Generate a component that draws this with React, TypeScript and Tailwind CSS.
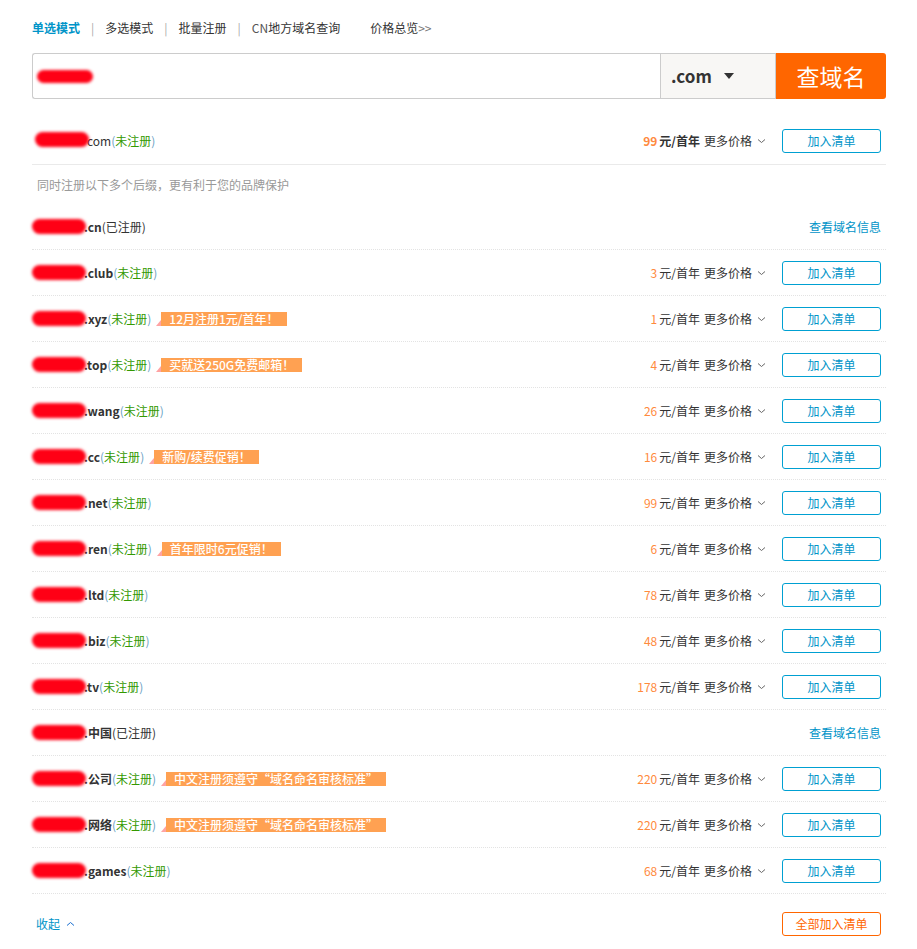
import React from "react";

type Row = {
  suffix: string;
  registered?: boolean;
  price?: string;
  tag?: string;
};

const rows: Row[] = [
  { suffix: ".cn", registered: true },
  { suffix: ".club", price: "3" },
  { suffix: ".xyz", price: "1", tag: "12月注册1元/首年！" },
  { suffix: ".top", price: "4", tag: "买就送250G免费邮箱！" },
  { suffix: ".wang", price: "26" },
  { suffix: ".cc", price: "16", tag: "新购/续费促销！" },
  { suffix: ".net", price: "99" },
  { suffix: ".ren", price: "6", tag: "首年限时6元促销！" },
  { suffix: ".ltd", price: "78" },
  { suffix: ".biz", price: "48" },
  { suffix: ".tv", price: "178" },
  { suffix: ".中国", registered: true },
  { suffix: ".公司", price: "220", tag: "中文注册须遵守“域名命名审核标准”" },
  { suffix: ".网络", price: "220", tag: "中文注册须遵守“域名命名审核标准”" },
  { suffix: ".games", price: "68" },
];

const Blob = () => (
  <span className="inline-block w-[54px] h-[15px] rounded-full bg-[#ff0015] blur-[1.5px] mr-[-2px]" />
);

const Chevron = ({ up = false }: { up?: boolean }) => (
  <svg
    width="9"
    height="6"
    viewBox="0 0 9 6"
    className={up ? "rotate-180" : ""}
    fill="none"
    stroke="currentColor"
    strokeWidth="1"
  >
    <path d="M1 1.5 L4.5 4.5 L8 1.5" />
  </svg>
);

const AddButton = () => (
  <button className="w-[99px] h-[24px] rounded-[3px] border border-[#00a0d2] text-[#0094c8] text-[12px] bg-white">
    加入清单
  </button>
);

const Price = ({ value, bold = false }: { value: string; bold?: boolean }) => (
  <div className="flex items-center text-[12px] text-[#333]">
    <span className={`text-[#ff8a3d] mr-[2px] ${bold ? "font-bold" : ""}`}>{value}</span>
    <span className={bold ? "font-bold" : ""}>元/首年</span>
    <span className="ml-[4px]">更多价格</span>
    <span className="ml-[5px] text-[#666]">
      <Chevron />
    </span>
  </div>
);

const Tag = ({ text }: { text: string }) => (
  <span className="inline-flex items-end ml-[5px]">
    <span className="w-0 h-0 border-l-[5px] border-l-transparent border-b-[6px] border-b-[#ffa3a3]" />
    <span className="bg-[#ffa152] text-white text-[12px] leading-[14px] h-[14px] px-[8px] font-medium">
      {text}
    </span>
  </span>
);

const Status = ({ registered }: { registered?: boolean }) =>
  registered ? (
    <span className="text-[#333]">(已注册)</span>
  ) : (
    <span className="text-[#339900]">
      <span className="text-[#6a9fc4]">(</span>未注册<span className="text-[#6a9fc4]">)</span>
    </span>
  );

const DomainRow = ({ row }: { row: Row }) => (
  <div className="flex items-center justify-between h-[46px] border-b border-dotted border-[#e3e3e3] pr-[5px]">
    <div className="flex items-center text-[12px]">
      <Blob />
      <span className="font-bold text-[#333]">{row.suffix}</span>
      <Status registered={row.registered} />
      {row.tag && <Tag text={row.tag} />}
    </div>
    {row.registered ? (
      <span className="text-[12px] text-[#0094c8]">查看域名信息</span>
    ) : (
      <div className="flex items-center gap-[16px]">
        <Price value={row.price ?? ""} />
        <AddButton />
      </div>
    )}
  </div>
);

export default function App() {
  return (
    <div
      className="w-[917px] min-h-[949px] bg-white pl-[32px] pr-[31px] pt-[18px]"
      style={{ fontFamily: '"Noto Sans CJK SC", "Liberation Sans", sans-serif' }}
    >
      {/* mode tabs */}
      <div className="flex items-center h-[20px] text-[12px] text-[#333]">
        <span className="font-bold text-[#0094c8]">单选模式</span>
        <span className="mx-[11px] text-[#aaa]">|</span>
        <span>多选模式</span>
        <span className="mx-[11px] text-[#aaa]">|</span>
        <span>批量注册</span>
        <span className="mx-[11px] text-[#aaa]">|</span>
        <span>
          <span className="text-[#555]">CN</span>地方域名查询
        </span>
        <span className="ml-[30px]">
          价格总览<span className="text-[#777]">&gt;&gt;</span>
        </span>
      </div>

      {/* search bar */}
      <div className="flex h-[46px] mt-[15px]">
        <div className="flex-1 flex items-center border border-[#ccc] border-r-0 rounded-l-[3px] pl-[4px]">
          <span className="inline-block w-[56px] h-[13px] rounded-full bg-[#ff0015] blur-[1.5px]" />
        </div>
        <div className="w-[116px] flex items-center border border-[#ccc] bg-[#f8f7f5] pl-[10px] text-[17px] text-[#333] font-bold">
          .com
          <span className="ml-[12px] w-0 h-0 border-l-[5px] border-r-[5px] border-t-[6px] border-l-transparent border-r-transparent border-t-[#333]" />
        </div>
        <button className="w-[110px] bg-[#ff6600] text-white text-[23px] rounded-r-[3px]">
          查域名
        </button>
      </div>

      {/* primary result */}
      <div className="flex items-center justify-between h-[47px] mt-[19px] border-b border-[#eaeaea] pr-[5px]">
        <div className="flex items-center text-[12px]">
          <span className="ml-[3px]">
            <Blob />
          </span>
          <span className="text-[#333]">com</span>
          <Status />
        </div>
        <div className="flex items-center gap-[16px]">
          <Price value="99" bold />
          <AddButton />
        </div>
      </div>

      <div className="h-[39px] flex items-center pl-[5px] text-[12px] text-[#999]">
        同时注册以下多个后缀，更有利于您的品牌保护
      </div>

      {rows.map((r) => (
        <DomainRow key={r.suffix} row={r} />
      ))}

      {/* footer */}
      <div className="flex items-center justify-between h-[60px] pr-[5px]">
        <span className="flex items-center gap-[6px] pl-[4px] text-[12px] text-[#0094c8]">
          收起
          <span className="text-[#1a6fd0]">
            <Chevron up />
          </span>
        </span>
        <button className="w-[99px] h-[24px] rounded-[3px] border border-[#ff6600] text-[#ff6600] text-[12px] bg-white">
          全部加入清单
        </button>
      </div>
    </div>
  );
}
